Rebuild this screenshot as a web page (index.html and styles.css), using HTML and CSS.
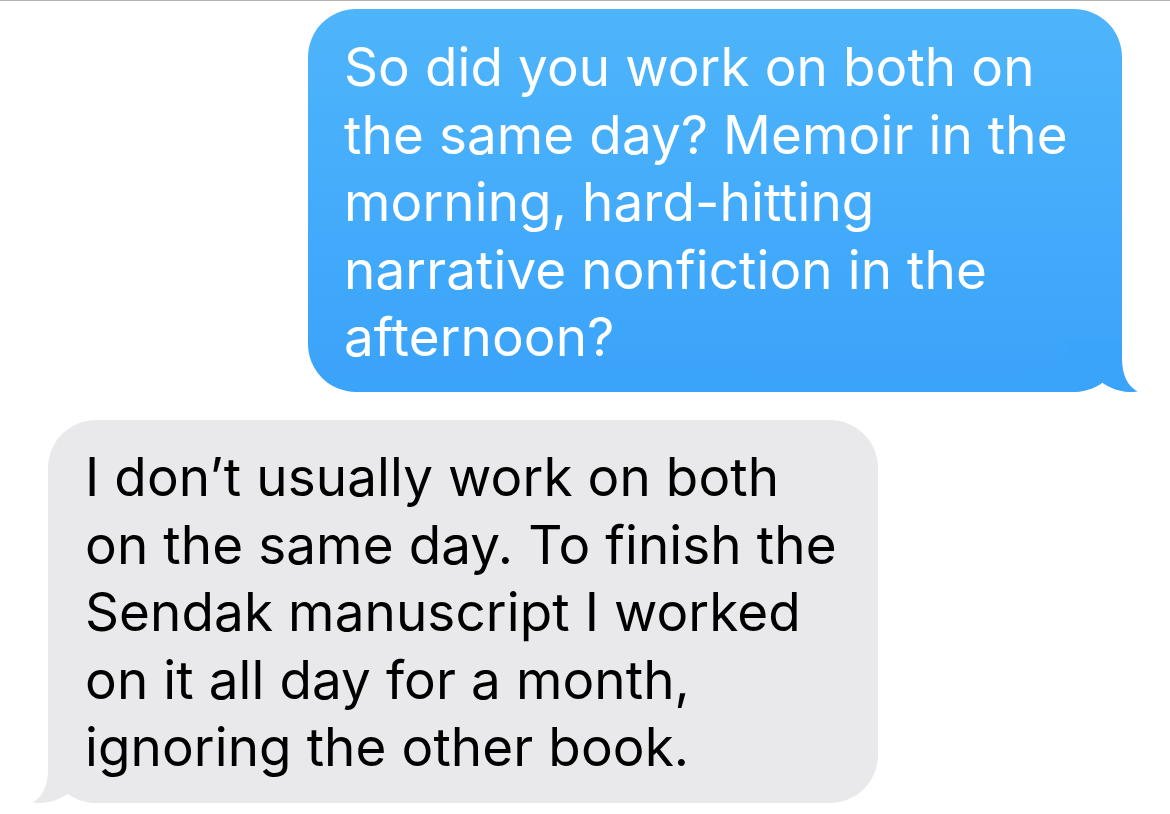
FILE: index.html
```html
<!DOCTYPE html>
<html>
<head>
<meta charset="utf-8">
<link rel="stylesheet" href="styles.css">
</head>
<body>
<div class="thread">
  <div class="row row-out">
    <div class="bubble bubble-out">
      <svg class="tail tail-out" viewBox="0 0 80 52" width="80" height="52"><path d="M62 0 L62 18 C62 36 68 46 77.5 51.5 C66 53.5 52 50 42 42.5 C34 49 22 52 8 52 L8 0 Z"/></svg>
      <p class="msg">So did you work on both on<br>the same day? Memoir in the<br>morning, hard-hitting<br>narrative nonfiction in the<br>afternoon?</p>
    </div>
  </div>
  <div class="row row-in">
    <div class="bubble bubble-in">
      <svg class="tail tail-in" viewBox="0 0 80 52" width="80" height="52"><path d="M62 0 L62 18 C62 36 68 46 77.5 51.5 C66 53.5 52 50 42 42.5 C34 49 22 52 8 52 L8 0 Z"/></svg>
      <p class="msg">I don’t usually work on both<br>on the same day. To finish the<br>Sendak manuscript I worked<br>on it all day for a month,<br>ignoring the other book.</p>
    </div>
  </div>
</div>
</body>
</html>
```
FILE: styles.css
```css
html, body {
  margin: 0;
  padding: 0;
  background: #ffffff;
}
.thread {
  border-top: 1px solid #b4b4b4;
  height: 813px;
  box-sizing: border-box;
  padding-top: 8px;
  display: flex;
  flex-direction: column;
  gap: 28px;
  font-family: Inter, "Noto Sans", sans-serif;
}
.row {
  display: flex;
}
.row-out {
  justify-content: flex-end;
  padding-right: 48px;
}
.row-in {
  justify-content: flex-start;
  padding-left: 48px;
}
.bubble {
  position: relative;
  border-radius: 48px;
  box-sizing: border-box;
  height: 383px;
}
.bubble-out {
  width: 814px;
  background: linear-gradient(180deg, #4eb5fb 0%, #3aa3fa 100%);
  color: #ffffff;
  padding: 25px 20px 0 36px;
}
.bubble-in {
  width: 830px;
  background: #e9e9eb;
  color: #000000;
  padding: 24px 20px 0 37px;
}
.msg {
  position: relative;
  margin: 0;
  font-size: 53px;
  line-height: 67.5px;
  white-space: nowrap;
  letter-spacing: 0.1px;
}
.tail {
  position: absolute;
  bottom: 0;
  display: block;
}
.tail-out {
  right: -18px;
  fill: #3aa3fa;
}
.tail-in {
  left: -18px;
  fill: #e9e9eb;
  transform: scaleX(-1);
}
```
